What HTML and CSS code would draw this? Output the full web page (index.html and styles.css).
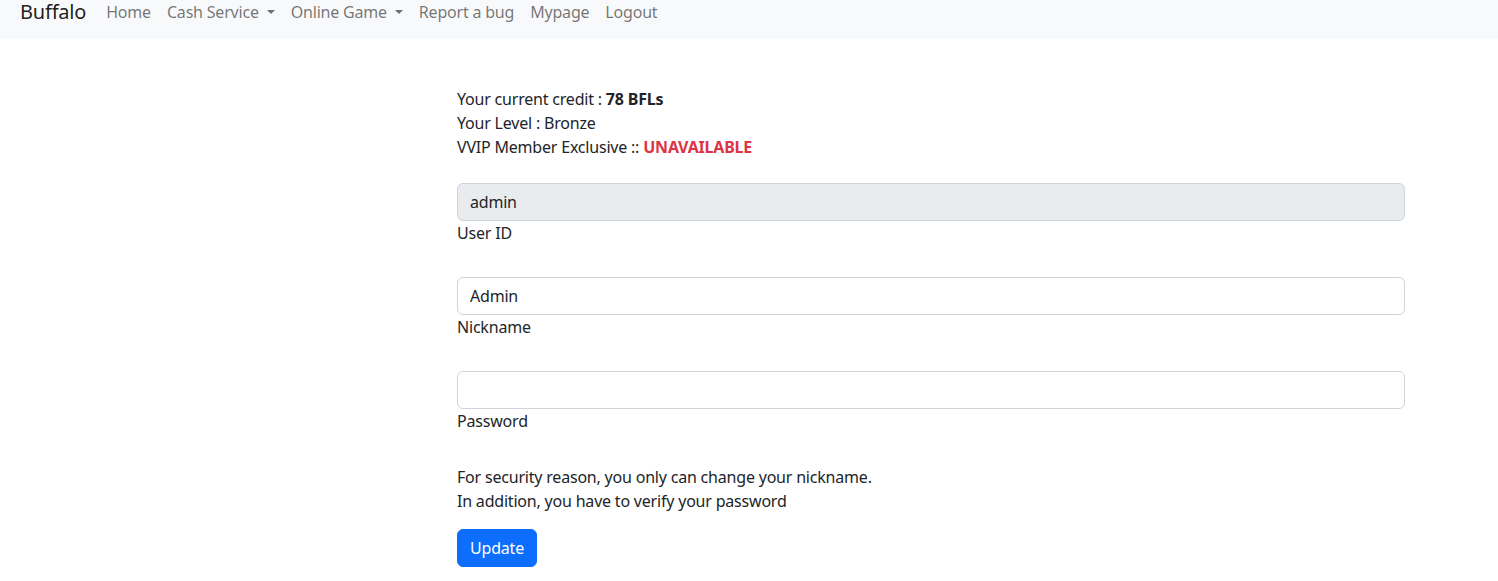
FILE: index.html
```html
<!DOCTYPE html>
<html lang="en">
<head>
    <meta charset="UTF-8">
    <meta name="viewport" content="width=device-width, initial-scale=1.0">
    <title>Buffalo - Mypage</title>
    <link rel="stylesheet" href="styles.css">
</head>
<body>
    <nav class="navbar">
        <a class="brand" href="#">Buffalo</a>
        <ul class="nav">
            <li><a class="nav-link" href="#">Home</a></li>
            <li><a class="nav-link dropdown" href="#">Cash Service</a></li>
            <li><a class="nav-link dropdown" href="#">Online Game</a></li>
            <li><a class="nav-link" href="#">Report a bug</a></li>
            <li><a class="nav-link" href="#">Mypage</a></li>
            <li><a class="nav-link" href="#">Logout</a></li>
        </ul>
    </nav>

    <main class="content">
        <div class="info">
            <div>Your current credit : <strong>78 BFLs</strong></div>
            <div>Your Level : Bronze</div>
            <div>VVIP Member Exclusive :: <strong class="danger">UNAVAILABLE</strong></div>
        </div>

        <form class="profile-form">
            <div class="form-group">
                <input type="text" class="form-control" id="userId" value="admin" disabled>
                <label for="userId">User ID</label>
            </div>
            <div class="form-group">
                <input type="text" class="form-control" id="nickname" value="Admin">
                <label for="nickname">Nickname</label>
            </div>
            <div class="form-group">
                <input type="password" class="form-control" id="password">
                <label for="password">Password</label>
            </div>

            <p class="notice">
                For security reason, you only can change your nickname.<br>
                In addition, you have to verify your password
            </p>

            <button type="submit" class="btn-primary">Update</button>
        </form>
    </main>
</body>
</html>
```

FILE: styles.css
```css
* {
    box-sizing: border-box;
}
body {
    margin: 0;
    font-family: "Noto Sans", "Open Sans", sans-serif;
    font-size: 16px;
    line-height: 24px;
    letter-spacing: -0.2px;
    color: #212529;
    background: #fff;
}
a {
    text-decoration: none;
}
.navbar {
    display: flex;
    align-items: flex-start;
    height: 39px;
    padding: 0 0 0 20px;
    background-color: #f8f9fa;
}
.brand {
    font-size: 20px;
    line-height: 24px;
    color: rgba(0,0,0,0.9);
    margin-right: 12px;
}
.nav {
    display: flex;
    list-style: none;
    margin: 0;
    padding: 0;
}
.nav-link {
    display: block;
    padding: 0 8px;
    color: rgba(0,0,0,0.55);
}
.dropdown::after {
    content: "";
    display: inline-block;
    margin-left: 8px;
    vertical-align: 0.255em;
    border-top: 0.3em solid;
    border-right: 0.3em solid transparent;
    border-left: 0.3em solid transparent;
}
.content {
    margin-left: 457px;
    width: 948px;
    padding-top: 48px;
}
.info {
    margin-bottom: 24px;
}
.info strong {
    font-weight: 700;
}
.danger {
    color: #dc3545;
}
.form-group {
    margin-bottom: 32px;
}
.form-group label {
    display: block;
}
.form-control {
    display: block;
    width: 100%;
    height: 38px;
    padding: 6px 12px;
    font-family: inherit;
    font-size: 16px;
    letter-spacing: inherit;
    color: #212529;
    background: #fff;
    border: 1px solid #ced4da;
    border-radius: 6px;
}
.form-control:disabled {
    background: #e9ecef;
    opacity: 1;
}
.notice {
    margin: 0 0 16px 0;
}
.btn-primary {
    height: 38px;
    padding: 6px 12px;
    font-family: inherit;
    font-size: 16px;
    letter-spacing: inherit;
    color: #fff;
    background: #0d6efd;
    border: 1px solid #0d6efd;
    border-radius: 6px;
    cursor: pointer;
}
```
